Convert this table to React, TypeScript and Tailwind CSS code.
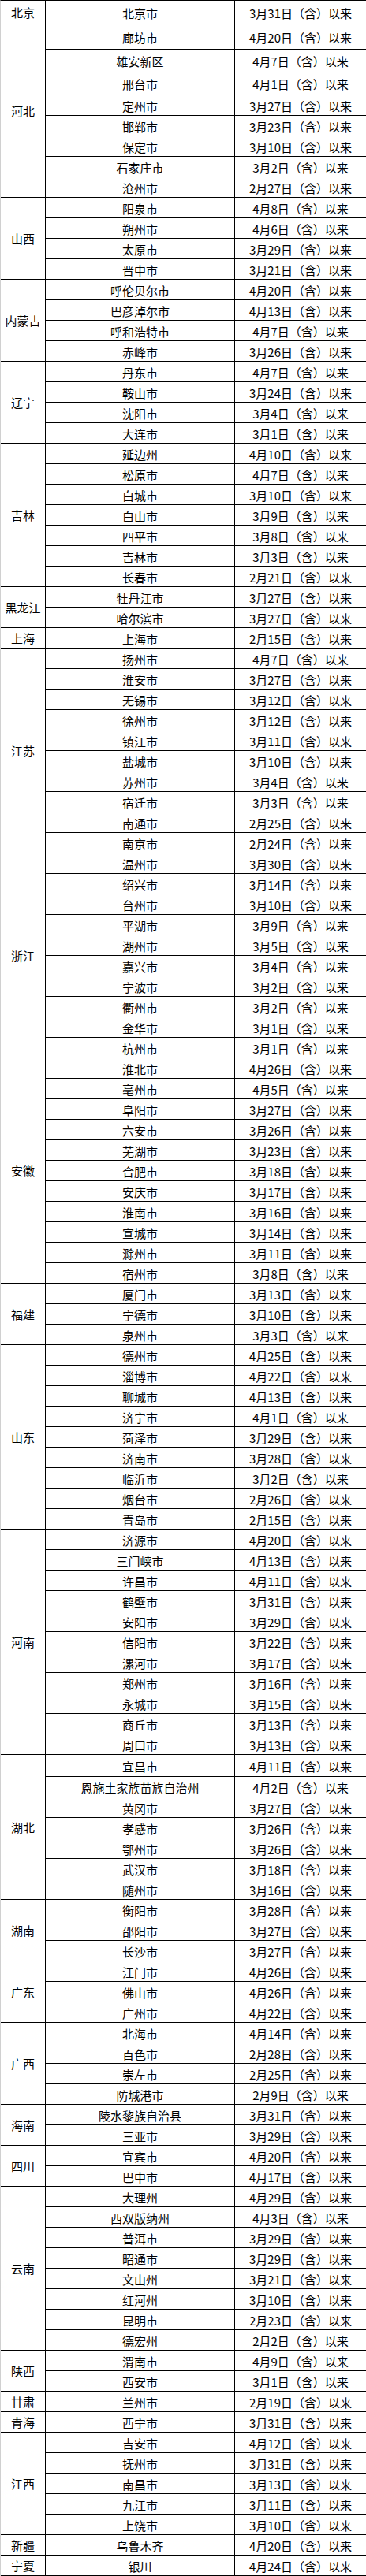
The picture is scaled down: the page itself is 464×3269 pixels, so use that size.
type City = { name: string; date: string; h?: string };
type Province = { name: string; cities: City[] };

const c = (name: string, date: string, h?: string): City => ({ name, date, h });

const provinces: Province[] = [
  { name: "北京", cities: [c("北京市", "3月31日", "h-[30px]")] },
  {
    name: "河北",
    cities: [
      c("廊坊市", "4月20日", "h-[32px]"),
      c("雄安新区", "4月7日", "h-[29px]"),
      c("邢台市", "4月1日", "h-[29px]"),
      c("定州市", "3月27日"),
      c("邯郸市", "3月23日"),
      c("保定市", "3月10日"),
      c("石家庄市", "3月2日"),
      c("沧州市", "2月27日"),
    ],
  },
  {
    name: "山西",
    cities: [c("阳泉市", "4月8日"), c("朔州市", "4月6日"), c("太原市", "3月29日"), c("晋中市", "3月21日")],
  },
  {
    name: "内蒙古",
    cities: [c("呼伦贝尔市", "4月20日"), c("巴彦淖尔市", "4月13日"), c("呼和浩特市", "4月7日"), c("赤峰市", "3月26日")],
  },
  {
    name: "辽宁",
    cities: [c("丹东市", "4月7日"), c("鞍山市", "3月24日"), c("沈阳市", "3月4日"), c("大连市", "3月1日")],
  },
  {
    name: "吉林",
    cities: [
      c("延边州", "4月10日"),
      c("松原市", "4月7日"),
      c("白城市", "3月10日"),
      c("白山市", "3月9日"),
      c("四平市", "3月8日"),
      c("吉林市", "3月3日"),
      c("长春市", "2月21日"),
    ],
  },
  { name: "黑龙江", cities: [c("牡丹江市", "3月27日"), c("哈尔滨市", "3月27日")] },
  { name: "上海", cities: [c("上海市", "2月15日")] },
  {
    name: "江苏",
    cities: [
      c("扬州市", "4月7日"),
      c("淮安市", "3月27日"),
      c("无锡市", "3月12日"),
      c("徐州市", "3月12日"),
      c("镇江市", "3月11日"),
      c("盐城市", "3月10日"),
      c("苏州市", "3月4日"),
      c("宿迁市", "3月3日"),
      c("南通市", "2月25日"),
      c("南京市", "2月24日"),
    ],
  },
  {
    name: "浙江",
    cities: [
      c("温州市", "3月30日"),
      c("绍兴市", "3月14日"),
      c("台州市", "3月10日"),
      c("平湖市", "3月9日"),
      c("湖州市", "3月5日"),
      c("嘉兴市", "3月4日"),
      c("宁波市", "3月2日"),
      c("衢州市", "3月2日"),
      c("金华市", "3月1日"),
      c("杭州市", "3月1日"),
    ],
  },
  {
    name: "安徽",
    cities: [
      c("淮北市", "4月26日"),
      c("亳州市", "4月5日"),
      c("阜阳市", "3月27日"),
      c("六安市", "3月26日"),
      c("芜湖市", "3月23日"),
      c("合肥市", "3月18日"),
      c("安庆市", "3月17日"),
      c("淮南市", "3月16日"),
      c("宣城市", "3月14日"),
      c("滁州市", "3月11日"),
      c("宿州市", "3月8日"),
    ],
  },
  { name: "福建", cities: [c("厦门市", "3月13日"), c("宁德市", "3月10日"), c("泉州市", "3月3日")] },
  {
    name: "山东",
    cities: [
      c("德州市", "4月25日"),
      c("淄博市", "4月22日"),
      c("聊城市", "4月13日"),
      c("济宁市", "4月1日"),
      c("菏泽市", "3月29日"),
      c("济南市", "3月28日"),
      c("临沂市", "3月2日"),
      c("烟台市", "2月26日"),
      c("青岛市", "2月15日"),
    ],
  },
  {
    name: "河南",
    cities: [
      c("济源市", "4月20日"),
      c("三门峡市", "4月13日"),
      c("许昌市", "4月11日"),
      c("鹤壁市", "3月31日"),
      c("安阳市", "3月29日"),
      c("信阳市", "3月22日"),
      c("漯河市", "3月17日"),
      c("郑州市", "3月16日"),
      c("永城市", "3月15日"),
      c("商丘市", "3月13日"),
      c("周口市", "3月13日"),
    ],
  },
  {
    name: "湖北",
    cities: [
      c("宜昌市", "4月11日", "h-[28px]"),
      c("恩施土家族苗族自治州", "4月2日"),
      c("黄冈市", "3月27日"),
      c("孝感市", "3月26日"),
      c("鄂州市", "3月26日"),
      c("武汉市", "3月18日"),
      c("随州市", "3月16日"),
    ],
  },
  { name: "湖南", cities: [c("衡阳市", "3月28日"), c("邵阳市", "3月27日"), c("长沙市", "3月27日")] },
  { name: "广东", cities: [c("江门市", "4月26日"), c("佛山市", "4月26日"), c("广州市", "4月22日")] },
  {
    name: "广西",
    cities: [c("北海市", "4月14日"), c("百色市", "2月28日"), c("崇左市", "2月25日"), c("防城港市", "2月9日")],
  },
  { name: "海南", cities: [c("陵水黎族自治县", "3月31日"), c("三亚市", "3月29日")] },
  { name: "四川", cities: [c("宜宾市", "4月20日"), c("巴中市", "4月17日")] },
  {
    name: "云南",
    cities: [
      c("大理州", "4月29日"),
      c("西双版纳州", "4月3日"),
      c("普洱市", "3月29日"),
      c("昭通市", "3月29日"),
      c("文山州", "3月21日"),
      c("红河州", "3月10日"),
      c("昆明市", "2月23日"),
      c("德宏州", "2月2日"),
    ],
  },
  { name: "陕西", cities: [c("渭南市", "4月9日"), c("西安市", "3月1日")] },
  { name: "甘肃", cities: [c("兰州市", "2月19日")] },
  { name: "青海", cities: [c("西宁市", "3月31日")] },
  {
    name: "江西",
    cities: [
      c("吉安市", "4月12日"),
      c("抚州市", "3月31日"),
      c("南昌市", "3月13日"),
      c("九江市", "3月11日"),
      c("上饶市", "3月10日"),
    ],
  },
  { name: "新疆", cities: [c("乌鲁木齐", "4月20日")] },
  { name: "宁夏", cities: [c("银川", "4月24日")] },
];

export default function App() {
  return (
    <div className="w-[464px] bg-white text-black text-[15px] leading-none font-['Noto_Sans_CJK_SC','Noto_Sans',sans-serif]">
      <div className="border-t border-l border-t-black border-l-[#d0d0d0]">
        {provinces.map((p) => (
          <div key={p.name} className="flex">
            {/* Province (merged cell) */}
            <div className="w-[57px] shrink-0 flex items-center justify-center border-r border-b border-black">
              {p.name}
            </div>
            <div className="flex-1 flex flex-col">
              {p.cities.map((city) => (
                <div key={city.name} className={`flex border-b border-black ${city.h ?? "h-[26px]"}`}>
                  <div className="w-[240px] shrink-0 flex items-center justify-center border-r border-black pt-px">
                    {city.name}
                  </div>
                  <div className="flex-1 flex items-center justify-center pt-px">
                    {city.date}（含）以来
                  </div>
                </div>
              ))}
            </div>
          </div>
        ))}
      </div>
    </div>
  );
}
